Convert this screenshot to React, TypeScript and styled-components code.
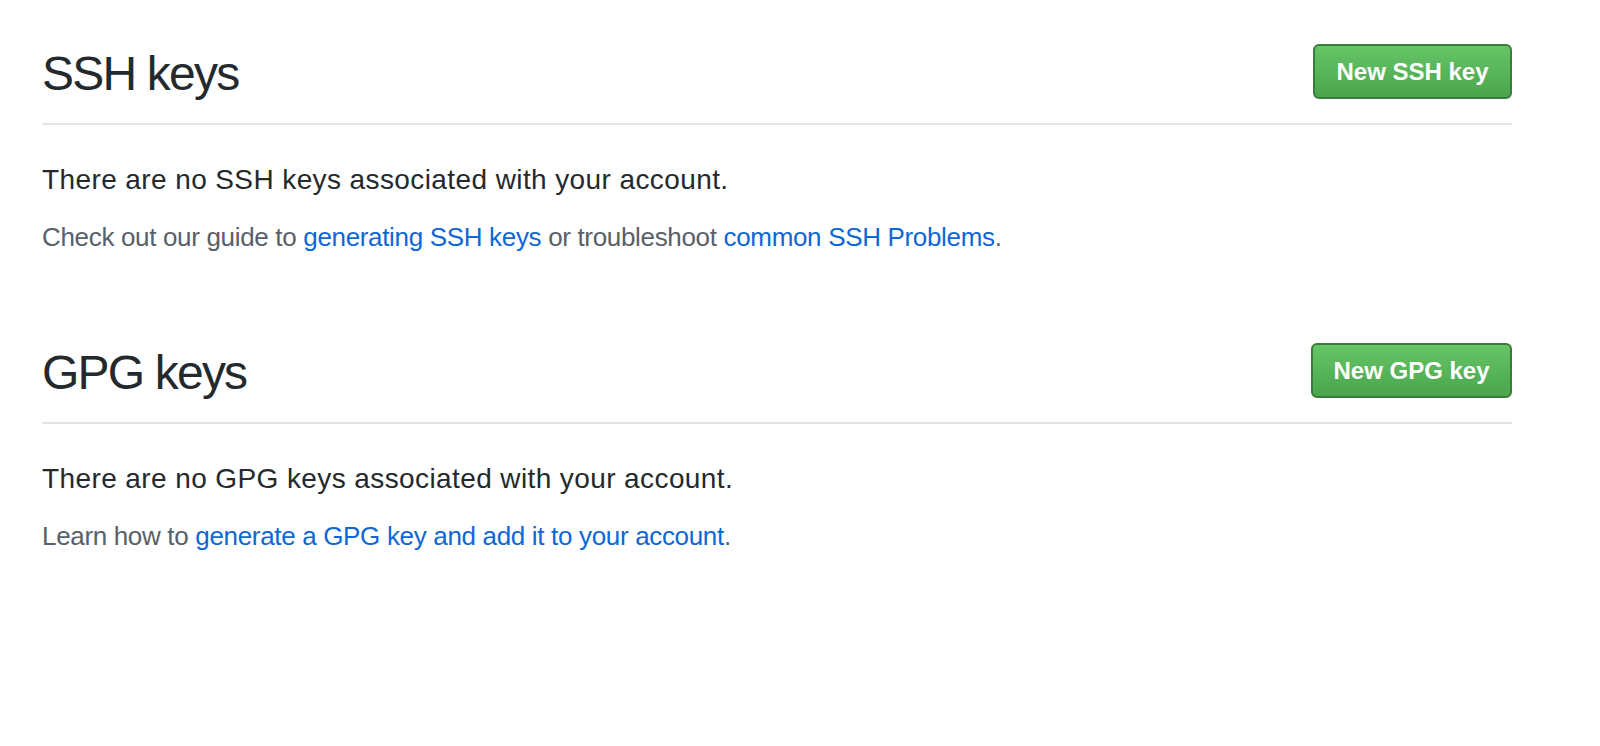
import React from "react";
import styled, { createGlobalStyle } from "styled-components";

const Global = createGlobalStyle`
  html, body { margin: 0; padding: 0; background: #ffffff; }
  body { font-family: "Liberation Sans", Arial, sans-serif; color: #24292e; }
`;

const Page = styled.div`
  padding: 44px 0 0 42px;
  width: 1470px;
  display: flex;
  flex-direction: column;
  gap: 86px;
`;

const Section = styled.section`
  display: flex;
  flex-direction: column;
`;

const Header = styled.div`
  display: flex;
  justify-content: space-between;
  align-items: flex-start;
  padding-bottom: 19px;
  border-bottom: 2px solid #e1e4e8;
`;

const Title = styled.h2`
  margin: 0;
  font-size: 48px;
  line-height: 60px;
  font-weight: 400;
  letter-spacing: -1.8px;
  color: #24292e;
`;

const Button = styled.button<{ $width: number }>`
  width: ${(p) => p.$width}px;
  height: 55px;
  border: 2px solid #3b7c3d;
  border-radius: 6px;
  background: linear-gradient(180deg, #66c567 0%, #4aa54c 100%);
  color: #ffffff;
  font-family: "Liberation Sans", Arial, sans-serif;
  font-weight: 700;
  font-size: 24px;
  cursor: pointer;
  padding: 0;
`;

const Lead = styled.p`
  margin: 34px 0 0 0;
  font-size: 28px;
  line-height: 42px;
  letter-spacing: 0.4px;
  color: #24292e;
`;

const Note = styled.p`
  margin: 17px 0 0 0;
  font-size: 26px;
  line-height: 39px;
  letter-spacing: -0.33px;
  color: #586069;
`;

const Link = styled.a`
  color: #0f67d6;
  text-decoration: none;
`;

export default function App() {
  return (
    <>
      <Global />
      <Page>
        <Section>
          <Header>
            <Title>SSH keys</Title>
            <Button $width={199}>New SSH key</Button>
          </Header>
          <Lead>There are no SSH keys associated with your account.</Lead>
          <Note>
            Check out our guide to <Link href="#">generating SSH keys</Link> or
            troubleshoot <Link href="#">common SSH Problems</Link>.
          </Note>
        </Section>
        <Section>
          <Header>
            <Title>GPG keys</Title>
            <Button $width={201}>New GPG key</Button>
          </Header>
          <Lead>There are no GPG keys associated with your account.</Lead>
          <Note>
            Learn how to{" "}
            <Link href="#">generate a GPG key and add it to your account</Link>.
          </Note>
        </Section>
      </Page>
    </>
  );
}
